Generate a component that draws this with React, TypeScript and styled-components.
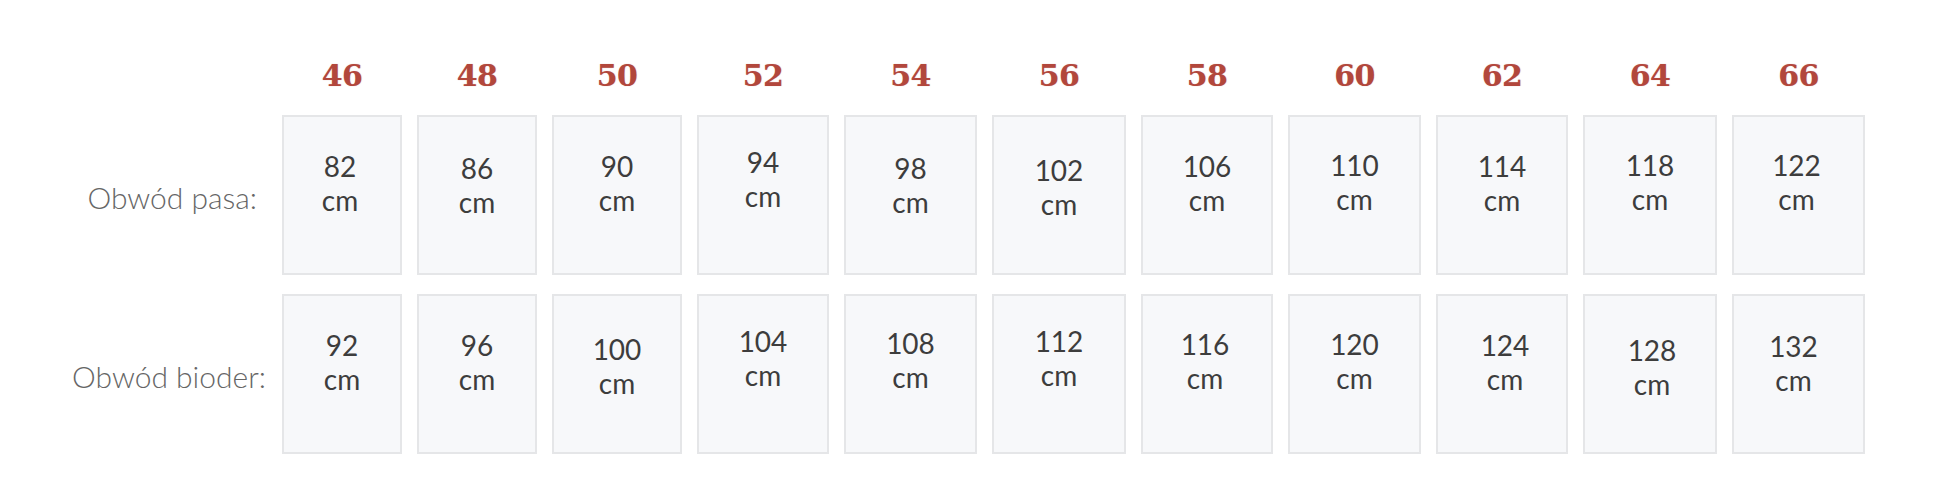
import React from "react";
import styled, { createGlobalStyle } from "styled-components";

const Global = createGlobalStyle`
  html, body { margin: 0; padding: 0; background: #ffffff; }
  body { width: 1940px; height: 492px; overflow: hidden; }
`;

const COLS = [120, 120, 130, 132, 133, 134, 132, 133, 132, 134, 133];

const Table = styled.div`
  display: grid;
  grid-template-columns: 267px ${COLS.map((c) => `${c}px`).join(" ")};
  grid-template-rows: 41px 160px 160px;
  column-gap: 15px;
  row-gap: 19px;
  padding-top: 55px;
  font-family: Lato, "Open Sans", sans-serif;
`;

const Corner = styled.div``;

const SizeHead = styled.div`
  display: flex;
  align-items: center;
  justify-content: center;
  font-family: "DejaVu Serif", "Liberation Serif", serif;
  font-weight: bold;
  font-size: 30px;
  letter-spacing: -0.5px;
  color: #b2473c;
  text-shadow: 0 0 1px rgba(178, 71, 60, 0.45);
`;

const RowLabel = styled.div<{ $pr: number }>`
  display: flex;
  align-items: center;
  justify-content: flex-end;
  padding-right: ${(p) => p.$pr}px;
  padding-top: 4px;
  font-family: Lato, "Open Sans", sans-serif;
  font-weight: 300;
  font-size: 30px;
  color: #666666;
`;

const Cell = styled.div`
  box-sizing: border-box;
  border: 2px solid #e5e6e8;
  background: #f7f8fa;
  display: flex;
  flex-direction: column;
  align-items: center;
  padding-top: 32px;
`;

const CellText = styled.div<{ $dx: number; $dy: number }>`
  display: flex;
  flex-direction: column;
  align-items: center;
  font-size: 28px;
  line-height: 34px;
  color: #3d3d3d;
  transform: translate(${(p) => p.$dx}px, ${(p) => p.$dy}px);
`;

const sizes = ["46", "48", "50", "52", "54", "56", "58", "60", "62", "64", "66"];

type Row = {
  label: string;
  pr: number;
  values: number[];
  dx: number[];
  dy: number[];
};

const rows: Row[] = [
  {
    label: "Obwód pasa:",
    pr: 10,
    values: [82, 86, 90, 94, 98, 102, 106, 110, 114, 118, 122],
    dx: [-2, 0, 0, 0, 0, 0, 0, 0, 0, 0, -2],
    dy: [0, 2, 0, -4, 2, 4, 0, -1, 0, -1, -1],
  },
  {
    label: "Obwód bioder:",
    pr: 1,
    values: [92, 96, 100, 104, 108, 112, 116, 120, 124, 128, 132],
    dx: [0, 0, 0, 0, 0, 0, -2, 0, 3, 2, -5],
    dy: [0, 0, 4, -4, -2, -4, -1, -1, 0, 5, 1],
  },
];

export default function App() {
  return (
    <>
      <Global />
      <Table>
        <Corner />
        {sizes.map((s) => (
          <SizeHead key={s}>{s}</SizeHead>
        ))}
        {rows.map((r) => (
          <React.Fragment key={r.label}>
            <RowLabel $pr={r.pr}>{r.label}</RowLabel>
            {r.values.map((v, i) => (
              <Cell key={v}>
                <CellText $dx={r.dx[i]} $dy={r.dy[i]}>
                  <span>{v}</span>
                  <span>cm</span>
                </CellText>
              </Cell>
            ))}
          </React.Fragment>
        ))}
      </Table>
    </>
  );
}
